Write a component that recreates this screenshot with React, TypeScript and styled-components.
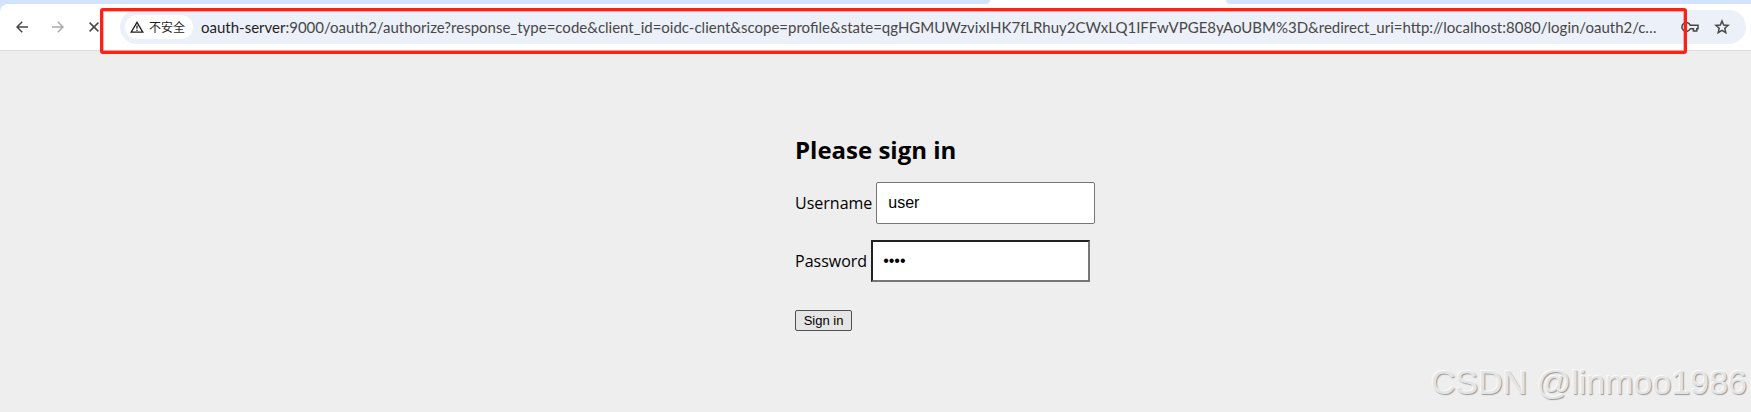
import React, { useState } from "react";
import styled, { createGlobalStyle } from "styled-components";

const uiFont = `"Open Sans", "Noto Sans", "Noto Sans CJK SC", sans-serif`;
const urlFont = `Lato, "Open Sans", "Noto Sans CJK SC", sans-serif`;
const controlFont = `"Liberation Sans", Arial, sans-serif`;

const GlobalStyle = createGlobalStyle`
  *, *::before, *::after { box-sizing: border-box; }
  body {
    margin: 0;
    background: #eee;
    color: #000;
    font-family: ${uiFont};
  }
`;

const Page = styled.div`
  position: relative;
  display: flex;
  flex-direction: column;
  min-height: 100vh;
  overflow: hidden;
`;

const TabStrip = styled.div`
  display: flex;
  height: 4px;
  background: #fff;
`;

const InactiveTabs = styled.div<{ $grow: number; $side: "left" | "right" }>`
  flex: ${(p) => p.$grow} 1 0;
  background: #d3e3fd;
  border-radius: ${(p) => (p.$side === "left" ? "0 0 8px 0" : "0 0 0 8px")};
`;

const ActiveTab = styled.div`
  flex: 236 1 0;
`;

const ToolbarFrame = styled.header`
  background: #d3e3fd;
`;

const Toolbar = styled.div`
  display: flex;
  align-items: center;
  height: 47px;
  padding: 0 5px 1px 10px;
  background: #fff;
  border-bottom: 1px solid #dcdcdc;
  border-radius: 8px 0 0 0;
`;

const NavButtons = styled.nav`
  display: flex;
  gap: 12px;
  margin-right: 14px;
`;

const IconButton = styled.button`
  display: flex;
  flex: none;
  align-items: center;
  justify-content: center;
  width: 24px;
  height: 24px;
  padding: 0;
  border: 0;
  background: none;
  color: #474747;

  &:disabled { color: #ababab; }
`;

const AddressBar = styled.div`
  display: flex;
  flex: 1;
  align-items: center;
  min-width: 0;
  height: 34px;
  padding: 0 12px 0 5px;
  border-radius: 17px;
  background: #ecf0f9;
`;

const SecurityChip = styled.button`
  display: flex;
  flex: none;
  align-items: center;
  gap: 5px;
  width: 68px;
  height: 24px;
  margin-right: 8px;
  padding: 0 0 0 5px;
  border: 0;
  border-radius: 12px;
  background: #fff;
  color: #1f1f1f;
  font: 12px/24px "Noto Sans CJK SC", sans-serif;
  white-space: nowrap;
`;

const UrlHost = styled.label`
  flex: none;
  color: #1f1f1f;
  font: 15px/24px ${urlFont};
`;

const UrlPath = styled.input`
  flex: 1;
  min-width: 0;
  height: 24px;
  margin-right: 16px;
  padding: 0;
  border: 0;
  outline: 0;
  background: transparent;
  color: #474747;
  font: 15px/24px ${urlFont};
  text-overflow: ellipsis;
`;

const AddressActions = styled.div`
  display: flex;
  gap: 8px;
`;

const Highlight = styled.div`
  position: absolute;
  top: 8px;
  left: 100px;
  right: 64px;
  height: 46px;
  border: 3px solid #ff2014;
  border-radius: 3px;
  box-shadow: inset 0 0 0 1px #ff201455;
  pointer-events: none;
`;

const Content = styled.main`
  width: 161px;
  margin: 0 auto;
  padding-top: 80px;
  white-space: nowrap;
`;

const Title = styled.h2`
  margin: 0 0 13px;
  font: 700 24px/38px ${uiFont};
`;

const Field = styled.div`
  display: flex;
  align-items: center;
  gap: 4px;
  margin-bottom: 16px;
`;

const FieldLabel = styled.label`
  font: 16px/24px ${uiFont};
`;

const TextInput = styled.input<{ $inset?: boolean }>`
  flex: none;
  width: 219px;
  height: 42px;
  padding: ${(p) => (p.$inset ? "10px" : "10px 11px")};
  border: ${(p) => (p.$inset ? "2px inset #767676" : "1px solid #767676")};
  border-radius: ${(p) => (p.$inset ? 0 : 2)}px;
  outline: 0;
  background: #fff;
  color: #000;
  font: 16px/20px ${controlFont};
`;

const SubmitButton = styled.button`
  display: block;
  width: 57px;
  height: 21px;
  margin-top: 28px;
  padding: 0;
  border: 1px solid #4f4f4f;
  border-radius: 2px;
  background: #e5e5e5;
  color: #000;
  font: 13px/19px ${controlFont};
`;

const Watermark = styled.div`
  position: absolute;
  right: 4px;
  bottom: 10px;
  color: #e4e4e4;
  font: 34px/40px ${controlFont};
  text-shadow: -1px -1px 0 #fafafa, 1px 1px 1px #999;
`;

const BackIcon = () => (
  <svg width="12" height="12" viewBox="0 0 12 12" fill="none" stroke="currentColor" strokeWidth="1.5">
    <path d="M12 6H1M6.2 0.8L1 6l5.2 5.2" />
  </svg>
);

const ForwardIcon = () => (
  <svg width="12" height="12" viewBox="0 0 12 12" fill="none" stroke="currentColor" strokeWidth="1.5">
    <path d="M0 6h11M5.8 0.8L11 6l-5.2 5.2" />
  </svg>
);

const StopIcon = () => (
  <svg width="10" height="10" viewBox="0 0 10 10" fill="none" stroke="currentColor" strokeWidth="1.5">
    <path d="M0.6 0.6l8.8 8.8M9.4 0.6L0.6 9.4" />
  </svg>
);

const WarningIcon = () => (
  <svg width="14" height="12" viewBox="0 0 14 12" fill="none" stroke="currentColor" strokeWidth="1.3">
    <path d="M7 1.3L12.8 11.2H1.2z" />
    <path d="M7 4.6v3.2M7 8.7v1.3" />
  </svg>
);

const KeyIcon = () => (
  <svg width="18" height="12" viewBox="0 0 18 12" fill="none" stroke="currentColor" strokeWidth="1.5">
    <path d="M9.3 4.2H17v3.6h-1.2v2.1h-3.4V7.8H9.3A4.4 4.4 0 1 1 9.3 4.2z" />
    <circle cx="5.2" cy="6" r="1.1" fill="currentColor" stroke="none" />
  </svg>
);

const StarIcon = () => (
  <svg width="16" height="16" viewBox="0 0 16 16" fill="none" stroke="currentColor" strokeWidth="1.5">
    <path d="M8 2l1.7 4 4.4.4-3.3 2.9 1 4.3L8 11.3l-3.8 2.3 1-4.3L1.9 6.4 6.3 6z" />
  </svg>
);

const urlPath =
  ":9000/oauth2/authorize?response_type=code&client_id=oidc-client&scope=profile&state=qgHGMUWzvixIHK7fLRhuy2CWxLQ1IFFwVPGE8yAoUBM%3D&redirect_uri=http://localhost:8080/login/oauth2/code/oidc-client";

export default function App() {
  const [username, setUsername] = useState("user");
  const [password, setPassword] = useState("user");

  return (
    <Page>
      <GlobalStyle />
      <TabStrip>
        <InactiveTabs $grow={990} $side="left" />
        <ActiveTab />
        <InactiveTabs $grow={525} $side="right" />
      </TabStrip>
      <ToolbarFrame>
        <Toolbar>
          <NavButtons>
            <IconButton aria-label="Back"><BackIcon /></IconButton>
            <IconButton aria-label="Forward" disabled><ForwardIcon /></IconButton>
            <IconButton aria-label="Stop"><StopIcon /></IconButton>
          </NavButtons>
          <AddressBar>
            <SecurityChip>
              <WarningIcon />
              不安全
            </SecurityChip>
            <UrlHost htmlFor="url">oauth-server</UrlHost>
            <UrlPath id="url" defaultValue={urlPath} spellCheck={false} />
            <AddressActions>
              <IconButton aria-label="Passwords"><KeyIcon /></IconButton>
              <IconButton aria-label="Bookmark"><StarIcon /></IconButton>
            </AddressActions>
          </AddressBar>
        </Toolbar>
      </ToolbarFrame>
      <Content>
        <form onSubmit={(e) => e.preventDefault()}>
          <Title>Please sign in</Title>
          <Field>
            <FieldLabel htmlFor="username">Username</FieldLabel>
            <TextInput id="username" value={username} onChange={(e) => setUsername(e.target.value)} />
          </Field>
          <Field>
            <FieldLabel htmlFor="password">Password</FieldLabel>
            <TextInput
              id="password"
              type="password"
              $inset
              value={password}
              onChange={(e) => setPassword(e.target.value)}
            />
          </Field>
          <SubmitButton type="submit">Sign in</SubmitButton>
        </form>
      </Content>
      <Highlight />
      <Watermark>CSDN @linmoo1986</Watermark>
    </Page>
  );
}
